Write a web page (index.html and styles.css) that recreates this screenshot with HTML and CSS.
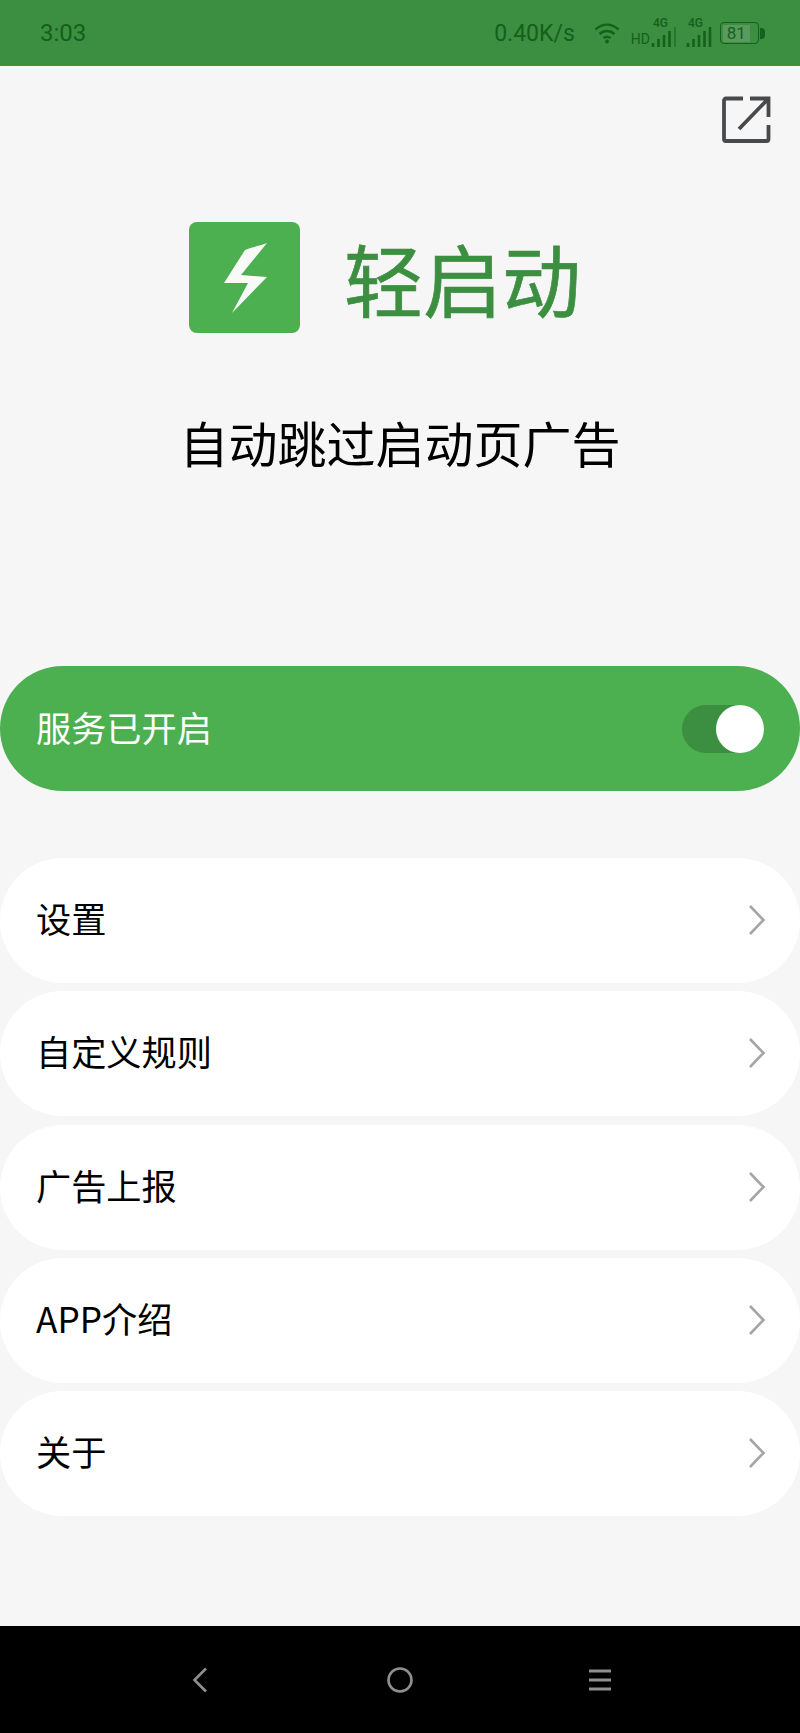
FILE: index.html
```html
<!DOCTYPE html>
<html lang="zh">
<head>
<meta charset="utf-8">
<title>轻启动</title>
<link rel="stylesheet" href="styles.css">
</head>
<body>
<div class="screen">
  <header class="status">
    <span class="time">3:03</span>
    <div class="status-right">
      <span class="speed">0.40K/s</span>
      <svg class="wifi" width="26" height="22" viewBox="0 0 26 22"><path d="M1.500 7.500C8.500 1 17.500 1 24.500 7.500M5.500 12C10 8 16 8 20.500 12M9.500 16C11.500 14.500 14.500 14.500 16.500 16" fill="none" stroke="#14601c" stroke-width="2.400"/><circle cx="13" cy="19.500" r="2" fill="#14601c"/></svg>
      <div class="signal-group">
        <span class="hd">HD</span>
        <div class="signal">
          <span class="four-g">4G</span>
          <svg width="26" height="20" viewBox="0 0 26 20"><path d="M2 20v-4M7.500 20v-8M13 20v-12M18.500 20V4" stroke="#14601c" stroke-width="2.600" fill="none"/><path d="M24 20V0" stroke="#14601c" stroke-opacity=".5" stroke-width="2" fill="none"/></svg>
        </div>
      </div>
      <div class="signal signal-two">
        <span class="four-g">4G</span>
        <svg width="26" height="20" viewBox="0 0 26 20"><path d="M2 20v-4M7.500 20v-8M13 20v-12M18.500 20V4M24 20V0" stroke="#14601c" stroke-width="2.600" fill="none"/></svg>
      </div>
      <div class="battery">
        <div class="battery-body"><div class="battery-fill">81</div></div>
        <div class="battery-cap"></div>
      </div>
    </div>
  </header>

  <main class="content">
    <div class="top-action">
      <svg width="50" height="48" viewBox="0 0 50 48"><path d="M21 2.500H4a2 2 0 0 0-2 2V43a2 2 0 0 0 2 2h40.500a2 2 0 0 0 2-2V29M28 2.500h18.500V21M46 3L17 33" fill="none" stroke="#47494a" stroke-width="3.800"/></svg>
    </div>

    <div class="brand">
      <div class="logo">
        <svg class="bolt" width="44" height="70" viewBox="0 0 44 70"><path d="M43 0C35 3 28 4 21 7L0 40L24 40L8 70L43 34L17 32Z" fill="#f8faf8"/></svg>
      </div>
      <h1 class="brand-name">轻启动</h1>
    </div>

    <p class="tagline">自动跳过启动页广告</p>

    <section class="service">
      <span class="service-label">服务已开启</span>
      <div class="toggle"><div class="toggle-knob"></div></div>
    </section>

    <nav class="menu">
      <a class="menu-row"><span>设置</span><svg class="chev" width="18" height="32" viewBox="0 0 18 32"><path d="M2 2L15.500 16L2 30" fill="none" stroke="#a5a5a5" stroke-width="2.600"/></svg></a>
      <a class="menu-row"><span>自定义规则</span><svg class="chev" width="18" height="32" viewBox="0 0 18 32"><path d="M2 2L15.500 16L2 30" fill="none" stroke="#a5a5a5" stroke-width="2.600"/></svg></a>
      <a class="menu-row"><span>广告上报</span><svg class="chev" width="18" height="32" viewBox="0 0 18 32"><path d="M2 2L15.500 16L2 30" fill="none" stroke="#a5a5a5" stroke-width="2.600"/></svg></a>
      <a class="menu-row"><span>APP介绍</span><svg class="chev" width="18" height="32" viewBox="0 0 18 32"><path d="M2 2L15.500 16L2 30" fill="none" stroke="#a5a5a5" stroke-width="2.600"/></svg></a>
      <a class="menu-row"><span>关于</span><svg class="chev" width="18" height="32" viewBox="0 0 18 32"><path d="M2 2L15.500 16L2 30" fill="none" stroke="#a5a5a5" stroke-width="2.600"/></svg></a>
    </nav>
  </main>

  <footer class="navbar">
    <div class="nav-cell"><svg width="16" height="26" viewBox="0 0 16 26"><path d="M14 1.500L2.500 13L14 24.500" fill="none" stroke="#8f8f8f" stroke-width="2.600"/></svg></div>
    <div class="nav-cell"><svg width="26" height="26" viewBox="0 0 26 26"><circle cx="13" cy="13" r="11.500" fill="none" stroke="#8f8f8f" stroke-width="2.600"/></svg></div>
    <div class="nav-cell"><svg width="24" height="24" viewBox="0 0 24 24"><path d="M1 3h22M1 12h22M1 21h22" fill="none" stroke="#8f8f8f" stroke-width="2.800"/></svg></div>
  </footer>
</div>
</body>
</html>
```
FILE: styles.css
```css
* { box-sizing: border-box; }
html, body { margin: 0; padding: 0; }
body {
  background: #f6f6f6;
  font-family: "Noto Sans CJK SC", "Roboto", sans-serif;
  color: #000;
}
.screen {
  width: 800px;
  height: 1733px;
  display: flex;
  flex-direction: column;
  overflow: hidden;
}
.status {
  height: 66px;
  flex: none;
  background: #3c8f40;
  color: #14601c;
  display: flex;
  align-items: center;
  justify-content: space-between;
  padding: 0 35px 0 40px;
  font-family: "Roboto", sans-serif;
}
.time { font-size: 24px; }
.status-right { display: flex; align-items: center; }
.speed { font-size: 23px; margin-right: 19px; }
.wifi { margin-right: 11px; }
.signal-group { display: flex; align-items: flex-end; height: 28px; }
.hd { font-size: 14px; line-height: 15px; margin-right: 1px; }
.signal { position: relative; width: 26px; height: 28px; display: flex; align-items: flex-end; }
.signal-two { margin-left: 9px; }
.four-g {
  position: absolute;
  top: -2px;
  left: 2px;
  font-size: 12px;
  font-weight: 500;
  line-height: 12px;
}
.battery { display: flex; align-items: center; margin-left: 8px; }
.battery-body {
  width: 39px;
  height: 22px;
  border: 1.500px solid #14601c;
  border-radius: 4px;
  padding: 1.500px;
}
.battery-fill {
  width: 81%;
  height: 100%;
  background: #5a9a5c;
  font-size: 17px;
  line-height: 16px;
  text-align: center;
  white-space: nowrap;
}
.battery-cap { width: 5px; height: 11px; background: #14601c; border-radius: 0 4px 4px 0; margin-left: 1px; }

.content { flex: 1; display: flex; flex-direction: column; }
.top-action { display: flex; justify-content: flex-end; padding: 30px 28px 0 0; }
.brand { display: flex; align-items: center; margin: 78px 0 0 189px; }
.logo {
  width: 111px;
  height: 111px;
  background: #4caf50;
  border-radius: 8px;
  display: flex;
  align-items: center;
  justify-content: center;
}
.bolt { margin-left: 2px; }
.brand-name {
  margin: 0 0 0 44px;
  font-size: 79px;
  font-weight: 400;
  -webkit-text-stroke: 0.7px #3c8f40;
  line-height: 111px;
  color: #3c8f40;
}
.tagline {
  margin: 74px 0 0;
  text-align: center;
  font-size: 49px;
  line-height: 70px;
}
.service {
  margin-top: 189px;
  height: 125px;
  background: #4caf50;
  border-radius: 62.500px;
  display: flex;
  align-items: center;
  justify-content: space-between;
  padding: 0 36px 0 36px;
}
.service-label { font-size: 35.200px; color: #fff; line-height: 50px; margin-top: -3px; }
.toggle {
  width: 82px;
  height: 48px;
  background: #3c8f40;
  border-radius: 24px;
  display: flex;
  justify-content: flex-end;
}
.toggle-knob { width: 48px; height: 48px; background: #fff; border-radius: 50%; }
.menu {
  margin-top: 67px;
  display: flex;
  flex-direction: column;
  gap: 8.250px;
}
.menu-row {
  height: 125px;
  background: #fff;
  border-radius: 62.500px;
  display: flex;
  align-items: center;
  justify-content: space-between;
  padding: 0 34px 0 36px;
  font-size: 35.200px;
}
.menu-row span { line-height: 50px; margin-top: -5px; }
.chev { margin-top: -1px; }
.navbar {
  height: 107px;
  flex: none;
  background: #000;
  display: flex;
  align-items: center;
  justify-content: center;
}
.nav-cell { width: 200px; display: flex; justify-content: center; }
```
